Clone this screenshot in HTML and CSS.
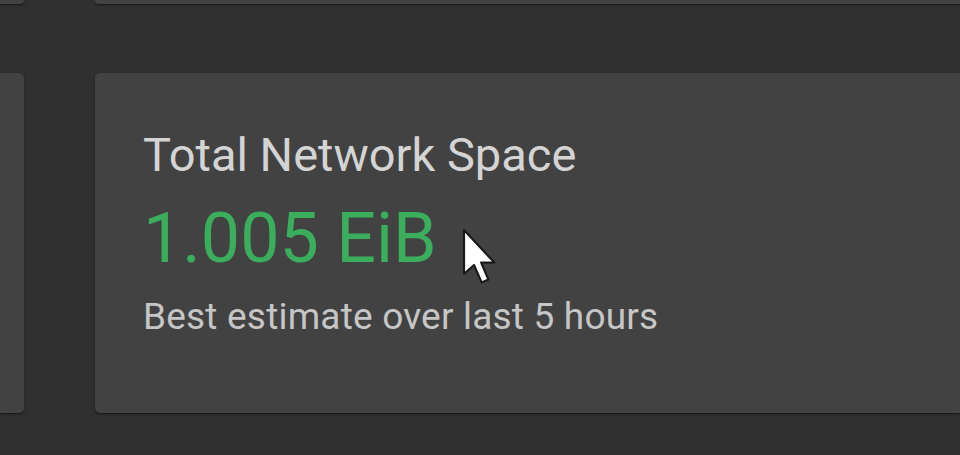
FILE: index.html
```html
<!DOCTYPE html>
<html lang="en">
<head>
<meta charset="utf-8">
<title>Total Network Space</title>
<link rel="stylesheet" href="styles.css">
</head>
<body>
<div class="grid">
  <div class="card card-top card-left"></div>
  <div class="card card-top card-right"></div>
  <div class="card card-left"></div>
  <div class="card card-main card-right">
    <div class="title">Total Network Space</div>
    <div class="value">1.005 EiB</div>
    <div class="desc">Best estimate over last 5 hours</div>
    <svg class="cursor" width="38" height="58" viewBox="0 0 19 29" aria-hidden="true">
      <path d="M1 1 L1 23 L6 18.5 L9.8 27.2 L13.2 25.8 L9.6 17.3 L16.2 17.3 Z" fill="#ffffff" stroke="#1a1a1a" stroke-width="1.1" stroke-linejoin="round"/>
    </svg>
  </div>
</div>
</body>
</html>
```

FILE: styles.css
```css
html, body {
  margin: 0;
  padding: 0;
  background: #303030;
  overflow: hidden;
  width: 960px;
  height: 455px;
}

.grid {
  display: grid;
  grid-template-columns: 24px 1fr;
  grid-template-rows: 4px 340px;
  column-gap: 71px;
  row-gap: 69px;
  width: 960px;
}

.card {
  background: #424242;
  border-radius: 5px;
  box-shadow: 0 2px 1px -1px rgba(0,0,0,0.25), 0 1px 2px 0 rgba(0,0,0,0.2), 0 1px 4px 0 rgba(0,0,0,0.15);
}

.card-left {
  border-top-left-radius: 0;
  border-bottom-left-radius: 0;
}

.card-right {
  border-top-right-radius: 0;
  border-bottom-right-radius: 0;
}

.card-top {
  border-top-left-radius: 0;
  border-top-right-radius: 0;
}

.card-main {
  position: relative;
  padding: 54px 48px 0 48px;
  font-family: Roboto, "Liberation Sans", sans-serif;
}

.title {
  font-size: 47px;
  line-height: 56px;
  color: #d4d4d4;
  font-weight: 400;
}

.value {
  font-size: 70px;
  line-height: 84px;
  color: #3aae5c;
  margin-top: 13px;
  font-weight: 400;
}

.desc {
  font-size: 37px;
  line-height: 44px;
  color: #c6c6c6;
  margin-top: 15px;
  letter-spacing: 0.2px;
}

.cursor {
  position: absolute;
  left: 367px;
  top: 155px;
}
```
